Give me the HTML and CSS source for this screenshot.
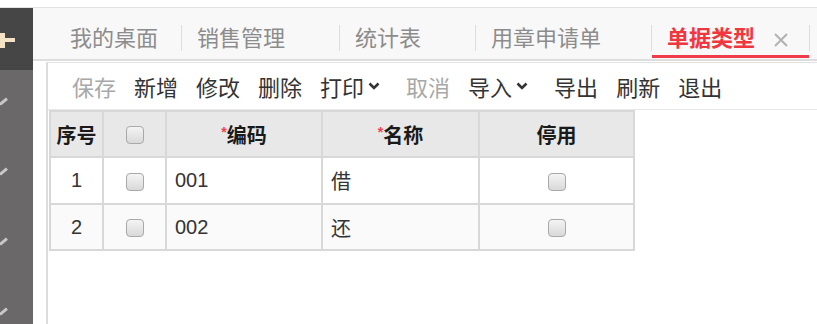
FILE: index.html
```html
<!DOCTYPE html>
<html lang="zh-CN">
<head>
    <meta charset="UTF-8">
    <title>单据类型</title>
    <link rel="stylesheet" href="styles.css">
</head>
<body>
    <div class="app">
        <div class="sidebar">
            <div class="side-top">
                <span class="plus"></span>
            </div>
            <div class="side-menu">
                <span class="pen"></span>
                <span class="pen"></span>
                <span class="pen"></span>
                <span class="pen"></span>
            </div>
        </div>

        <div class="main">
            <div class="tabbar">
                <div class="tab home">我的桌面</div>
                <span class="sep"></span>
                <div class="tab">销售管理</div>
                <span class="sep"></span>
                <div class="tab">统计表</div>
                <span class="sep"></span>
                <div class="tab wide">用章申请单</div>
                <span class="sep"></span>
                <div class="tab active">单据类型
                    <svg class="close" width="16" height="16" viewBox="0 0 16 16"><path d="M2 2L14 14M14 2L2 14" stroke="#b2b2b2" stroke-width="2"/></svg>
                </div>
                <span class="sep"></span>
            </div>

            <div class="content">
                <div class="panel">
                    <div class="toolbar">
                        <span class="btn off">保存</span>
                        <span class="btn">新增</span>
                        <span class="btn">修改</span>
                        <span class="btn">删除</span>
                        <span class="btn">打印<svg class="caret" width="12" height="8" viewBox="0 0 12 8"><path d="M1.5 1.5L6 6L10.5 1.5" fill="none" stroke="#333" stroke-width="2.6"/></svg></span>
                        <span class="btn off">取消</span>
                        <span class="btn">导入<svg class="caret" width="12" height="8" viewBox="0 0 12 8"><path d="M1.5 1.5L6 6L10.5 1.5" fill="none" stroke="#333" stroke-width="2.6"/></svg></span>
                        <span class="btn">导出</span>
                        <span class="btn">刷新</span>
                        <span class="btn">退出</span>
                    </div>

                    <table class="grid">
                        <colgroup>
                            <col class="c-no">
                            <col class="c-chk">
                            <col class="c-code">
                            <col class="c-name">
                            <col class="c-off">
                        </colgroup>
                        <thead>
                            <tr>
                                <th>序号</th>
                                <th><span class="chk"></span></th>
                                <th><sup class="req">*</sup>编码</th>
                                <th><sup class="req">*</sup>名称</th>
                                <th>停用</th>
                            </tr>
                        </thead>
                        <tbody>
                            <tr>
                                <td class="center">1</td>
                                <td class="center"><span class="chk"></span></td>
                                <td>001</td>
                                <td>借</td>
                                <td class="center"><span class="chk"></span></td>
                            </tr>
                            <tr class="alt">
                                <td class="center">2</td>
                                <td class="center"><span class="chk"></span></td>
                                <td>002</td>
                                <td>还</td>
                                <td class="center"><span class="chk"></span></td>
                            </tr>
                        </tbody>
                    </table>
                </div>
            </div>
        </div>
    </div>
</body>
</html>
```

FILE: styles.css
```css
* { box-sizing: border-box; }
body { margin: 0; background: #fff; font-family: "Liberation Sans", "Noto Sans CJK SC", sans-serif; color: #333; }
.app { display: flex; height: 324px; padding-top: 7px; }
.app { background: linear-gradient(#e2e2e2, #e2e2e2) 0 7px / 100% 1px no-repeat; }

/* sidebar */
.sidebar { width: 33px; display: flex; flex-direction: column; margin-top: 1px; }
.side-top { height: 62px; background: #474646; display: flex; align-items: center; }
.plus { width: 15px; height: 15px; margin-top: 2px; background:
    linear-gradient(#f4e2c4, #f4e2c4) 0 5px / 15px 4px no-repeat,
    linear-gradient(#f4e2c4, #f4e2c4) 0 0 / 5px 15px no-repeat; }
.side-menu { flex: 1; background: #6a6868; display: flex; flex-direction: column; gap: 67px; padding-top: 30px; }
.pen { width: 9px; height: 3px; background: #c8c8c8; transform: rotate(-40deg); margin-left: -1px; }

/* tabs */
.main { flex: 1; display: flex; flex-direction: column; }
.tabbar { height: 53px; margin-top: 1px; background: #f8f8f8; border-bottom: 2px solid #dedede; display: flex; padding-left: 22px; }
.tab { height: 50px; padding: 16px 54px 0 15px; font-size: 22px; line-height: 30px; color: #8c8c8c; white-space: nowrap; border-bottom: 3px solid transparent; display: flex; align-items: flex-start; }
.tab.home { padding-right: 23px; }
.tab.wide { padding-right: 50px; }
.tab.active { color: #f0363f; font-weight: bold; border-bottom-color: #f03c48; padding-right: 16px; width: 157px; }
.close { margin: 8px 0 0 18px; flex: none; }
.sep { width: 1px; height: 26px; margin-top: 17px; background: #dedede; }

/* panel */
.content { flex: 1; padding: 1px 0 0 13px; }
.panel { height: 100%; border-left: 2px solid #dcdcdc; border-top: 1px solid #e2e2e2; }
.toolbar { height: 47px; display: flex; align-items: center; gap: 18px; padding: 0 0 0 24px; border-bottom: 1px solid #e8e8e8; }
.btn { font-size: 22px; color: #333; white-space: nowrap; display: flex; align-items: center; }
.btn.off { color: #a8a8a8; }
.caret { margin: 0 8px 0 4px; flex: none; }

/* grid */
.grid { border-collapse: collapse; table-layout: fixed; width: 584px; margin-left: 1px; font-size: 20px; }
.grid th, .grid td { border: 2px solid #d8d8d8; padding: 0 8px; }
.grid th { background: #e8e8e8; height: 46px; font-weight: bold; color: #1a1a1a; text-align: center; padding: 0 2px; }
.grid td { height: 47px; }
.grid tr.alt td { background: #fafafa; height: 46px; }
.c-no { width: 53px; }
.c-chk { width: 63px; }
.c-code { width: 156px; }
.c-name { width: 157px; }
.c-off { width: 155px; }
.center { text-align: center; }
.req { color: #f2404a; font-size: 14px; vertical-align: 6px; }
.chk { display: inline-block; width: 18px; height: 18px; border: 1.5px solid #a9a9a9; border-radius: 4px; background: linear-gradient(#f4f4f4, #d9d9d9); vertical-align: middle; }
```
